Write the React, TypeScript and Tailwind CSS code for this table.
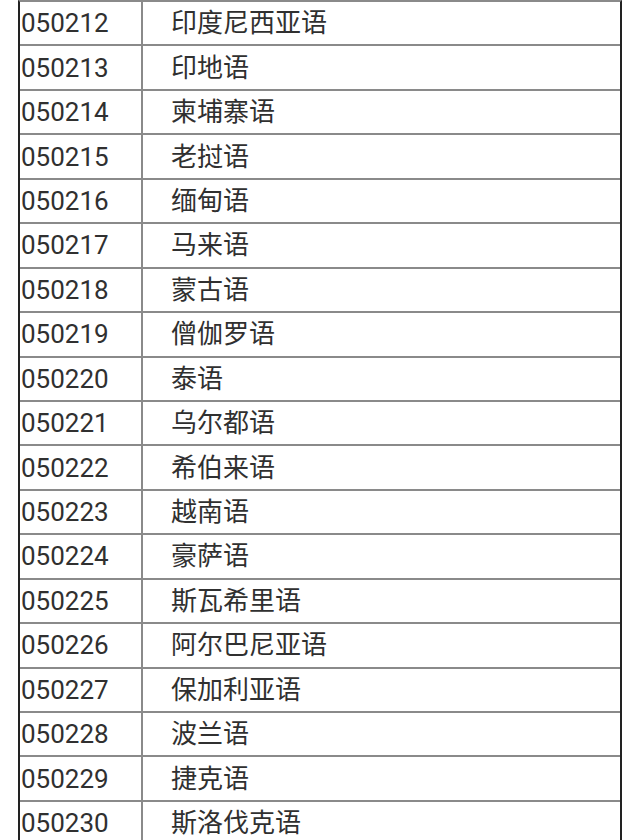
import React from "react";

const rows: [string, string][] = [
  ["050212", "印度尼西亚语"],
  ["050213", "印地语"],
  ["050214", "柬埔寨语"],
  ["050215", "老挝语"],
  ["050216", "缅甸语"],
  ["050217", "马来语"],
  ["050218", "蒙古语"],
  ["050219", "僧伽罗语"],
  ["050220", "泰语"],
  ["050221", "乌尔都语"],
  ["050222", "希伯来语"],
  ["050223", "越南语"],
  ["050224", "豪萨语"],
  ["050225", "斯瓦希里语"],
  ["050226", "阿尔巴尼亚语"],
  ["050227", "保加利亚语"],
  ["050228", "波兰语"],
  ["050229", "捷克语"],
  ["050230", "斯洛伐克语"],
];

export default function App() {
  return (
    <div className="w-[640px] h-[840px] overflow-hidden bg-white pl-[18px]">
      <div
        className="w-[604px] border-l-2 border-r-2 border-[#222] border-t-2 border-t-[#8a8a8a] text-[26px] text-[#303030]"
        style={{ fontFamily: 'Roboto, "Noto Sans CJK SC", sans-serif' }}
      >
        {rows.map(([code, name]) => (
          <div
            key={code}
            className="flex h-[44.44px] border-b-2 border-[#8a8a8a]"
          >
            <div className="w-[123px] flex items-center pl-[1px] border-r-2 border-[#8a8a8a] leading-none">
              {code}
            </div>
            <div className="flex-1 flex items-center pl-[28px] leading-none">
              {name}
            </div>
          </div>
        ))}
      </div>
    </div>
  );
}
